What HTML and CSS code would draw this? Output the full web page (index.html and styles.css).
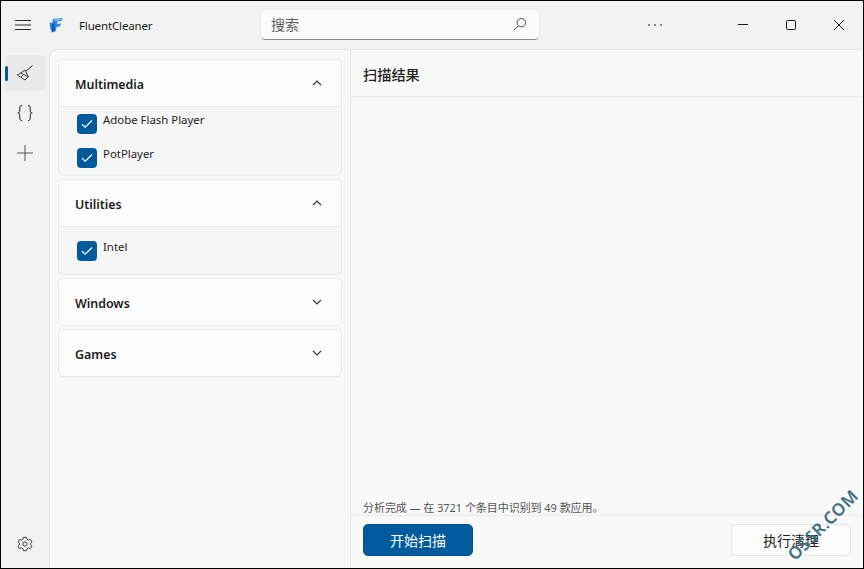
FILE: index.html
```html
<!DOCTYPE html>
<html lang="zh">
<head>
<meta charset="utf-8">
<title>FluentCleaner</title>
<link rel="stylesheet" href="styles.css">
</head>
<body>
<div class="window">
  <header class="titlebar">
    <div class="tb-left">
      <svg class="menu" width="16" height="12" viewBox="0 0 16 12"><path d="M0 1.5h16M0 6h16M0 10.5h16" stroke="#2b2b2b" fill="none"/></svg>
      <svg class="logo" width="14" height="15" viewBox="0 0 14 15"><path d="M4 1 L13.5 0 L12.5 3 L8.5 3.5 L8 6 L12 5.5 L11 8.5 L7.5 9 L7 13 L3 14.5 L1.5 11 L0.5 4 L3 5.5 Z" fill="#2f86e6"/><path d="M2.5 6 L6 5 L5.5 13 L3 14 Z" fill="#0f5cc0"/><path d="M5.5 1.5 L12.5 0.6 L12 2 L6.5 3 Z" fill="#8cc8f7"/></svg>
      <span class="app-name">FluentCleaner</span>
    </div>
    <div class="search">
      <span class="search-text">搜索</span>
      <svg width="14" height="14" viewBox="0 0 14 14"><circle cx="8.3" cy="5.7" r="4.2" fill="none" stroke="#444"/><path d="M5.3 8.8 L1 13" stroke="#444" fill="none"/></svg>
    </div>
    <svg class="more" width="14" height="4" viewBox="0 0 14 4"><circle cx="1" cy="2" r="0.9" fill="#555"/><circle cx="7" cy="2" r="0.9" fill="#555"/><circle cx="13" cy="2" r="0.9" fill="#555"/></svg>
    <div class="win-controls">
      <svg width="48" height="14" viewBox="0 0 48 14"><path d="M19 6.5h10" stroke="#1a1a1a" fill="none"/></svg>
      <svg width="48" height="14" viewBox="0 0 48 14"><rect x="19.5" y="2.5" width="9" height="9" rx="1.2" fill="none" stroke="#1a1a1a"/></svg>
      <svg width="48" height="14" viewBox="0 0 48 14"><path d="M19 2l10 10M29 2L19 12" stroke="#1a1a1a" fill="none"/></svg>
    </div>
  </header>
  <div class="main">
    <nav class="rail">
      <div class="rail-item active">
        <span class="pill"></span>
        <svg width="18" height="18" viewBox="0 0 18 18"><path d="M10 7 L16.5 1.5" stroke="#2b2b2b" fill="none"/><path d="M4.7 9 L9 6 L12.3 12.7 L9 16 L1.3 11 Z M4.7 9 L12.3 12.7 M5 13 L7 11.2" stroke="#2b2b2b" stroke-width="0.9" fill="none" stroke-linejoin="round"/></svg>
      </div>
      <div class="rail-item">
        <svg width="16" height="16" viewBox="0 0 16 16"><path d="M5 0.5 C3 0.5 2.8 1.5 2.8 3 V6 C2.8 7 2.2 8 0.8 8 C2.2 8 2.8 9 2.8 10 V13 C2.8 14.5 3 15.5 5 15.5 M11 0.5 C13 0.5 13.2 1.5 13.2 3 V6 C13.2 7 13.8 8 15.2 8 C13.8 8 13.2 9 13.2 10 V13 C13.2 14.5 13 15.5 11 15.5" fill="none" stroke="#222" stroke-width="1"/></svg>
      </div>
      <div class="rail-item"><svg width="16" height="16" viewBox="0 0 16 16"><path d="M8 0v16M0 8h16" stroke="#555" fill="none"/></svg></div>
      <div class="rail-spacer"></div>
      <div class="rail-item gear">
        <svg width="16" height="16" viewBox="0 0 16 16"><path d="M6.4 1.3 L9.6 1.3 L10 3.2 L11.6 4.1 L13.5 3.5 L15 6 L13.6 7.2 L13.6 8.8 L15 10 L13.5 12.5 L11.6 11.9 L10 12.8 L9.6 14.7 L6.4 14.7 L6 12.8 L4.4 11.9 L2.5 12.5 L1 10 L2.4 8.8 L2.4 7.2 L1 6 L2.5 3.5 L4.4 4.1 L6 3.2 Z" fill="none" stroke="#444" stroke-linejoin="round"/><circle cx="8" cy="8" r="2.1" fill="none" stroke="#444"/></svg>
      </div>
    </nav>
    <div class="content">
      <section class="list-pane">
        <div class="card">
          <div class="card-head"><span class="head-text">Multimedia</span><svg class="chev" width="10" height="6" viewBox="0 0 10 6"><path d="M1 5 L5 1 L9 5" fill="none" stroke="#333" stroke-width="1.1"/></svg></div>
          <div class="card-body multi">
            <label class="check"><span class="box"><svg width="12" height="10" viewBox="0 0 12 10"><path d="M1 5.2 L4.2 8.2 L11 1.5" fill="none" stroke="#fff" stroke-width="1.2"/></svg></span><span class="check-label">Adobe Flash Player</span></label>
            <label class="check"><span class="box"><svg width="12" height="10" viewBox="0 0 12 10"><path d="M1 5.2 L4.2 8.2 L11 1.5" fill="none" stroke="#fff" stroke-width="1.2"/></svg></span><span class="check-label">PotPlayer</span></label>
          </div>
        </div>
        <div class="card">
          <div class="card-head"><span class="head-text">Utilities</span><svg class="chev" width="10" height="6" viewBox="0 0 10 6"><path d="M1 5 L5 1 L9 5" fill="none" stroke="#333" stroke-width="1.1"/></svg></div>
          <div class="card-body single">
            <label class="check"><span class="box"><svg width="12" height="10" viewBox="0 0 12 10"><path d="M1 5.2 L4.2 8.2 L11 1.5" fill="none" stroke="#fff" stroke-width="1.2"/></svg></span><span class="check-label">Intel</span></label>
          </div>
        </div>
        <div class="card">
          <div class="card-head flat"><span class="head-text">Windows</span><svg class="chev" width="10" height="6" viewBox="0 0 10 6"><path d="M1 1 L5 5 L9 1" fill="none" stroke="#333" stroke-width="1.1"/></svg></div>
        </div>
        <div class="card">
          <div class="card-head flat"><span class="head-text">Games</span><svg class="chev" width="10" height="6" viewBox="0 0 10 6"><path d="M1 1 L5 5 L9 1" fill="none" stroke="#333" stroke-width="1.1"/></svg></div>
        </div>
      </section>
      <section class="result-pane">
        <h1 class="result-title">扫描结果</h1>
        <div class="result-body"></div>
        <p class="status">分析完成 — 在 3721 个条目中识别到 49 款应用。</p>
        <div class="actions">
          <button class="btn primary">开始扫描</button>
          <button class="btn secondary">执行清理</button>
        </div>
      </section>
    </div>
  </div>
  <div class="watermark">OSSR.COM</div>
</div>
</body>
</html>
```
FILE: styles.css
```css
* { box-sizing: border-box; }
html, body { margin: 0; height: 100%; }
body {
  font-family: "Noto Sans", "Noto Sans CJK SC", sans-serif;
  color: #1b1b1b;
  background: #000;
}
.window {
  position: relative;
  width: 864px;
  height: 569px;
  border: 1px solid #000;
  background: #f2f2f2;
  display: flex;
  flex-direction: column;
  overflow: hidden;
}
.titlebar {
  height: 48px;
  flex: none;
  display: flex;
  align-items: center;
}
.tb-left {
  width: 259px;
  display: flex;
  align-items: center;
  padding-left: 14px;
}
.logo { margin-left: 18px; margin-top: 1px; }
.app-name {
  margin-left: 16px;
  margin-top: 2px;
  font-size: 11.5px;
  letter-spacing: -0.14px;
  line-height: 16px;
}
.search {
  width: 280px;
  height: 31px;
  margin-top: -1px;
  padding: 0 12px 0 10px;
  display: flex;
  align-items: center;
  justify-content: space-between;
  background: #fbfbfb;
  border: 1px solid #ececec;
  border-bottom: 1px solid #8a8a8a;
  border-radius: 5px;
}
.search-text { font-size: 14px; line-height: 18px; color: #5c5c5c; }
.search svg { margin-top: -2px; }
.more { margin-left: 108px; margin-top: -1px; }
.win-controls {
  margin-left: auto;
  display: flex;
  align-items: center;
}
.main { flex: 1; display: flex; min-height: 0; }
.rail {
  width: 48px;
  flex: none;
  display: flex;
  flex-direction: column;
  align-items: center;
  padding: 6px 4px;
  gap: 4px;
}
.rail-item {
  position: relative;
  width: 40px;
  height: 36px;
  border-radius: 5px;
  display: flex;
  align-items: center;
  justify-content: center;
}
.rail-item.active { background: #eaeaea; }
.pill {
  position: absolute;
  left: 0;
  top: 11px;
  width: 3px;
  height: 15px;
  border-radius: 2px;
  background: #005a9e;
}
.rail-spacer { flex: 1; }
.content {
  flex: 1;
  display: flex;
  min-width: 0;
  background: #f9f9f9;
  border-top: 1px solid #e5e5e5;
  border-left: 1px solid #e5e5e5;
  border-top-left-radius: 8px;
}
.list-pane {
  width: 301px;
  flex: none;
  padding: 9px 8px 0;
  border-right: 1px solid #e5e5e5;
  display: flex;
  flex-direction: column;
  gap: 3px;
}
.card {
  border: 1px solid #e9e9e9;
  border-radius: 5px;
  overflow: hidden;
  background: #f6f6f6;
}
.card-head {
  height: 47px;
  padding: 0 19px 0 16px;
  display: flex;
  align-items: center;
  justify-content: space-between;
  background: #fdfdfd;
  border-bottom: 1px solid #e9e9e9;
}
.head-text {
  font-size: 12.4px;
  font-weight: 600;
  line-height: 16px;
  margin-top: 4px;
}
.card-head.flat { height: 46px; border-bottom: 0; }
.card-body { padding: 0 18px; display: flex; flex-direction: column; }
.card-body.multi { height: 68px; padding-top: 7px; gap: 14px; }
.card-body.single { height: 47px; padding-top: 14px; }
.check { display: flex; align-items: flex-start; gap: 6px; height: 20px; }
.box {
  width: 20px;
  height: 20px;
  flex: none;
  border-radius: 4px;
  background: #005a9e;
  display: flex;
  align-items: center;
  justify-content: center;
}
.check-label { font-size: 11.4px; line-height: 16px; margin-top: -2px; color: #222; }
.result-pane {
  flex: 1;
  min-width: 0;
  display: flex;
  flex-direction: column;
}
.result-title {
  margin: 0;
  height: 47px;
  flex: none;
  padding: 1px 12px 0;
  display: flex;
  align-items: center;
  font-size: 14.2px;
  font-weight: 500;
  border-bottom: 1px solid #e9e9e9;
  color: #222;
}
.result-body { flex: 1; }
.status {
  margin: 0;
  padding: 1px 12px 0;
  height: 17px;
  font-size: 11px;
  line-height: 16px;
  letter-spacing: -0.05px;
  color: #555;
  border-bottom: 1px solid #e9e9e9;
  white-space: nowrap;
}
.actions {
  height: 52px;
  flex: none;
  padding: 8px 12px 12px;
  display: flex;
  justify-content: space-between;
  align-items: flex-start;
}
.btn {
  height: 32px;
  border-radius: 5px;
  font: inherit;
  font-size: 14px;
  padding: 0;
}
.primary { width: 110px; background: #005a9e; color: #fff; border: 1px solid #00518f; }
.secondary { width: 120px; background: #fdfdfd; color: #1b1b1b; border: 1px solid #e8e8e8; }
.watermark {
  position: absolute;
  left: 778px;
  top: 519px;
  width: 80px;
  font-size: 17px;
  font-weight: 600;
  line-height: 18px;
  letter-spacing: 0.6px;
  text-align: center;
  color: #3f6f80;
  transform: rotate(-45deg);
  white-space: nowrap;
}
```
